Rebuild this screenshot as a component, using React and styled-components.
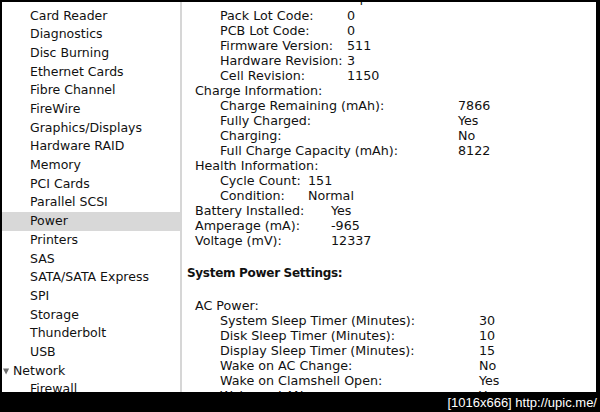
import React from 'react';
import styled, { createGlobalStyle } from 'styled-components';

const GlobalStyle = createGlobalStyle`
    html, body {
        margin: 0;
        padding: 0;
        background: #000;
    }
`

const sidebarItems = [
    'Card Reader', 'Diagnostics', 'Disc Burning', 'Ethernet Cards', 'Fibre Channel',
    'FireWire', 'Graphics/Displays', 'Hardware RAID', 'Memory', 'PCI Cards',
    'Parallel SCSI', 'Power', 'Printers', 'SAS', 'SATA/SATA Express', 'SPI',
    'Storage', 'Thunderbolt', 'USB',
];

function InfoGroup({ indent, labelWidth, rows, cut }) {
    return (
        <Group $indent={indent} $labelWidth={labelWidth} $cut={cut}>
            {rows.map(([label, value]) => (
                <React.Fragment key={label}>
                    <Cell>{label}</Cell>
                    <Cell>{value}</Cell>
                </React.Fragment>
            ))}
        </Group>
    )
}

function App() {
    return (
        <Frame>
            <GlobalStyle />
            <Window>
                <Sidebar>
                    {sidebarItems.map((item) => (
                        <SideItem key={item} $selected={item === 'Power'}>{item}</SideItem>
                    ))}
                    <SideSection>
                        <Disclosure viewBox="0 0 8 8"><path d="M0 1 L7 1 L3.5 8 Z" fill="#6e6e6e" /></Disclosure>
                        Network
                    </SideSection>
                    <SideItem>Firewall</SideItem>
                </Sidebar>
                <Content>
                    {/* row scrolled mostly out of view at the top */}
                    <InfoGroup cut indent={38} labelWidth={127} rows={[
                        ['Device Name:', 'bq20z451'],
                    ]} />
                    <InfoGroup indent={38} labelWidth={127} rows={[
                        ['Pack Lot Code:', '0'],
                        ['PCB Lot Code:', '0'],
                        ['Firmware Version:', '511'],
                        ['Hardware Revision:', '3'],
                        ['Cell Revision:', '1150'],
                    ]} />
                    <Heading $indent={13}>Charge Information:</Heading>
                    <InfoGroup indent={38} labelWidth={238} rows={[
                        ['Charge Remaining (mAh):', '7866'],
                        ['Fully Charged:', 'Yes'],
                        ['Charging:', 'No'],
                        ['Full Charge Capacity (mAh):', '8122'],
                    ]} />
                    <Heading $indent={13}>Health Information:</Heading>
                    <InfoGroup indent={38} labelWidth={88} rows={[
                        ['Cycle Count:', '151'],
                        ['Condition:', 'Normal'],
                    ]} />
                    <InfoGroup indent={13} labelWidth={136} rows={[
                        ['Battery Installed:', 'Yes'],
                        ['Amperage (mA):', '-965'],
                        ['Voltage (mV):', '12337'],
                    ]} />
                    <SectionTitle>System Power Settings:</SectionTitle>
                    <Heading $indent={13}>AC Power:</Heading>
                    <InfoGroup indent={38} labelWidth={259} rows={[
                        ['System Sleep Timer (Minutes):', '30'],
                        ['Disk Sleep Timer (Minutes):', '10'],
                        ['Display Sleep Timer (Minutes):', '15'],
                        ['Wake on AC Change:', 'No'],
                        ['Wake on Clamshell Open:', 'Yes'],
                        ['Wake on LAN:', 'Yes'],
                    ]} />
                </Content>
            </Window>
            <Footer>[1016x666] http://upic.me/</Footer>
        </Frame>
    )
}

export default App;

const Frame = styled.div`
    width: 600px;
    height: 412px;
    display: flex;
    flex-direction: column;
    background: #000;
    overflow: hidden;
`

const Window = styled.div`
    flex: 1;
    min-height: 0;
    margin: 2px 4px 0 2px;
    display: flex;
    background: #fff;
    overflow: hidden;
    font-family: "DejaVu Sans", sans-serif;
    color: #111;
`

const Sidebar = styled.div`
    width: 178px;
    flex-shrink: 0;
    padding-top: 4.6px;
    border-right: 2px solid #d6d6d6;
    font-size: 12.5px;
`

const SideItem = styled.div`
    height: 18.7px;
    line-height: 18.7px;
    padding-left: 28px;
    white-space: nowrap;
    background: ${(p) => (p.$selected ? '#d8d8d8' : 'transparent')};
`

const SideSection = styled.div`
    height: 18.7px;
    line-height: 18.7px;
    display: flex;
    align-items: center;
    gap: 3px;
    padding-left: 1px;
`

const Disclosure = styled.svg`
    width: 7px;
    height: 8px;
`

const Content = styled.div`
    flex: 1;
    min-width: 0;
    margin-top: -12.5px;
    font-size: 12.7px;
    line-height: 15px;
    white-space: nowrap;
`

const Group = styled.div`
    display: grid;
    grid-template-columns: ${(p) => p.$labelWidth}px auto;
    padding-left: ${(p) => p.$indent}px;
    margin-bottom: ${(p) => (p.$cut ? '3px' : '0')};
`

const Cell = styled.div`
    height: 15px;
`

const Heading = styled.div`
    height: 15px;
    padding-left: ${(p) => p.$indent}px;
`

const SectionTitle = styled.div`
    height: 15px;
    margin: 18px 0 17px;
    padding-left: 5px;
    font-size: 12px;
    letter-spacing: -0.3px;
    font-weight: bold;
`

const Footer = styled.div`
    height: 20px;
    display: flex;
    align-items: center;
    justify-content: flex-end;
    padding-right: 3px;
    color: #fff;
    font-family: "Liberation Sans", sans-serif;
    font-size: 13px;
`
